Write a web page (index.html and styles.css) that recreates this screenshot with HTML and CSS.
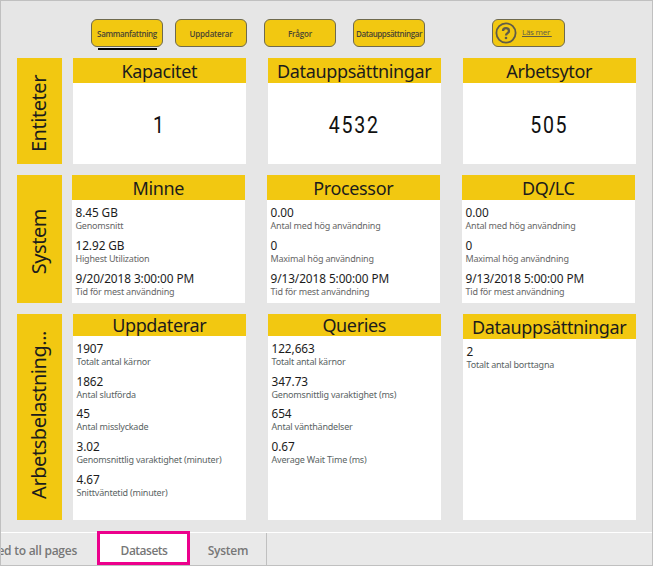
FILE: index.html
```html
<!DOCTYPE html>
<html lang="sv">
<head>
<meta charset="utf-8">
<title>Kapacitet</title>
<link rel="stylesheet" href="styles.css">
</head>
<body>
<div class="app">
  <nav class="buttons">
    <a class="button selected">Sammanfattning</a>
    <a class="button updates">Uppdaterar</a>
    <a class="button queries">Frågor</a>
    <a class="button datasets">Datauppsättningar</a>
    <a class="button help">
      <svg class="help-icon" viewBox="0 0 22 22"><circle cx="11" cy="11" r="9.6"/><path class="mark" d="M8 9.1C8 7.1 9.3 6.2 11 6.2s3 1 3 2.7c0 2.3-3 2.2-3 4.6"/><circle class="dot" cx="11" cy="16" r="1.3"/></svg>
      <span class="help-label">Läs mer&nbsp;</span>
    </a>
  </nav>
  <main class="report">
    <section class="row entities">
      <h1 class="side"><span class="side-text">Entiteter</span></h1>
      <article class="card"><h2>Kapacitet</h2><p class="big">1</p></article>
      <article class="card"><h2>Datauppsättningar</h2><p class="big">4532</p></article>
      <article class="card"><h2>Arbetsytor</h2><p class="big">505</p></article>
    </section>
    <section class="row system">
      <h1 class="side"><span class="side-text">System</span></h1>
      <article class="card"><h2>Minne</h2>
        <dl><dt>8.45 GB</dt><dd>Genomsnitt</dd><dt>12.92 GB</dt><dd>Highest Utilization</dd><dt>9/20/2018 3:00:00 PM</dt><dd>Tid för mest användning</dd></dl></article>
      <article class="card"><h2>Processor</h2>
        <dl><dt>0.00</dt><dd>Antal med hög användning</dd><dt>0</dt><dd>Maximal hög användning</dd><dt>9/13/2018 5:00:00 PM</dt><dd>Tid för mest användning</dd></dl></article>
      <article class="card"><h2>DQ/LC</h2>
        <dl><dt>0.00</dt><dd>Antal med hög användning</dd><dt>0</dt><dd>Maximal hög användning</dd><dt>9/13/2018 5:00:00 PM</dt><dd>Tid för mest användning</dd></dl></article>
    </section>
    <section class="row workload">
      <h1 class="side"><span class="side-text">Arbetsbelastning...</span></h1>
      <article class="card"><h2>Uppdaterar</h2>
        <dl><dt>1907</dt><dd>Totalt antal kärnor</dd><dt>1862</dt><dd>Antal slutförda</dd><dt>45</dt><dd>Antal misslyckade</dd><dt>3.02</dt><dd>Genomsnittlig varaktighet (minuter)</dd><dt>4.67</dt><dd>Snittväntetid (minuter)</dd></dl></article>
      <article class="card"><h2>Queries</h2>
        <dl><dt>122,663</dt><dd>Totalt antal kärnor</dd><dt>347.73</dt><dd>Genomsnittlig varaktighet (ms)</dd><dt>654</dt><dd>Antal vänthändelser</dd><dt>0.67</dt><dd>Average Wait Time (ms)</dd></dl></article>
      <article class="card evicted"><h2>Datauppsättningar</h2>
        <dl><dt>2</dt><dd>Totalt antal borttagna</dd></dl></article>
    </section>
  </main>
  <footer class="tabs">
    <span class="tab all">ed to all pages</span>
    <span class="tab active">Datasets</span>
    <span class="tab sys">System</span>
  </footer>
</div>
</body>
</html>
```
FILE: styles.css
```css
* { box-sizing: border-box; margin: 0; padding: 0; }
body { font-family: "Noto Sans", "Open Sans", sans-serif; color: #1c1c1c; }
.app {
  width: 653px; height: 566px; overflow: hidden;
  display: flex; flex-direction: column;
  background: #e6e6e6; border: 1px solid #c0c0c0;
}
.buttons { display: flex; height: 57px; padding: 18px 0 0 90px; font-family: "Open Sans", sans-serif; }
.button {
  position: relative; flex: none;
  width: 72px; height: 28px; border: 1.5px solid #6f6a4e; border-radius: 6px;
  background: #f2c811; color: #4a4533;
  font-size: 8px; font-weight: 600; line-height: 28px; text-align: center; letter-spacing: -0.2px;
  display: flex; justify-content: center; white-space: nowrap;
}
.selected { letter-spacing: -0.35px; }
.selected::after {
  content: ""; position: absolute; left: 6px; top: 28px;
  width: 59px; height: 2px; background: #000;
}
.updates { margin-left: 12px; }
.queries { margin-left: 17px; }
.datasets { margin-left: 17px; letter-spacing: -0.42px; }
.help { width: 73px; margin-left: 67px; justify-content: flex-start; padding-left: 2px; }
.help-icon { width: 22px; height: 22px; margin-top: 2px; fill: none; stroke: #605c48; stroke-width: 1.8; }
.help-icon .mark { stroke-width: 2.3; }
.help-icon .dot { fill: #605c48; stroke: none; }
.help-label { margin-left: 5px; line-height: 24px; font-weight: 400; text-decoration: underline; color: #605c48; letter-spacing: -0.25px; }

.report { display: flex; flex-direction: column; gap: 11px; height: 474px; padding-left: 16px; }
.row { display: flex; gap: 22.5px; }
.entities { height: 106px; }
.system { height: 128px; }
.workload { height: 206px; }
.side {
  width: 44.7px; margin-right: -11.2px; background: #f2c811;
  display: flex; align-items: center; justify-content: center;
  font-size: 20px; font-weight: 400; letter-spacing: -0.45px;
}
.side-text { writing-mode: vertical-rl; transform: rotate(180deg); line-height: 26px; white-space: nowrap; }
.entities .side-text { margin-top: 5px; }
.system .side-text { margin-top: 6px; }
.workload .side-text { margin-bottom: 5px; }
.card { width: 172.5px; background: #fff; }
.system .card { position: relative; left: -1px; }
h2 {
  height: 25px; background: #f2c811; text-align: center; white-space: nowrap;
  font-size: 18px; line-height: 27px; font-weight: 400; letter-spacing: -0.35px;
}
.big {
  padding-top: 29px; text-align: center; color: #111;
  font-family: Roboto, sans-serif;
  font-size: 23px; line-height: 28px; letter-spacing: 2px;
  transform: scaleX(0.85);
}
dl { padding: 4px 0 0 3.5px; white-space: nowrap; }
dt { font-size: 11.8px; line-height: 16px; height: 15px; letter-spacing: -0.07px; }
dd { font-size: 9px; line-height: 13px; height: 18px; color: #666; letter-spacing: -0.2px; }
.workload h2 { height: 22px; line-height: 23px; }
.workload dl { padding-top: 4px; }
.workload dt { height: 15px; }
.workload dd { height: 17.7px; color: #5a6464; }
.workload .evicted h2 { height: 25px; line-height: 27px; }

.tabs {
  display: flex; height: 33px; border-top: 1px solid #fff;
  background: #e9e9e9; color: #777; font-size: 12px; font-weight: 600; line-height: 36px; letter-spacing: -0.25px;
  font-family: "Open Sans", sans-serif;
}
.tab { white-space: nowrap; text-align: center; }
.all { width: 96px; display: flex; justify-content: flex-end; padding-right: 20px; }
.active { width: 93px; height: 34px; margin-top: -2px; padding-left: 1px; position: relative; line-height: 34px; background: #fff; border: 3px solid #ec008c; letter-spacing: -0.5px; }
.sys { width: 77px; border-right: 1px solid #c0c0c0; }
```
